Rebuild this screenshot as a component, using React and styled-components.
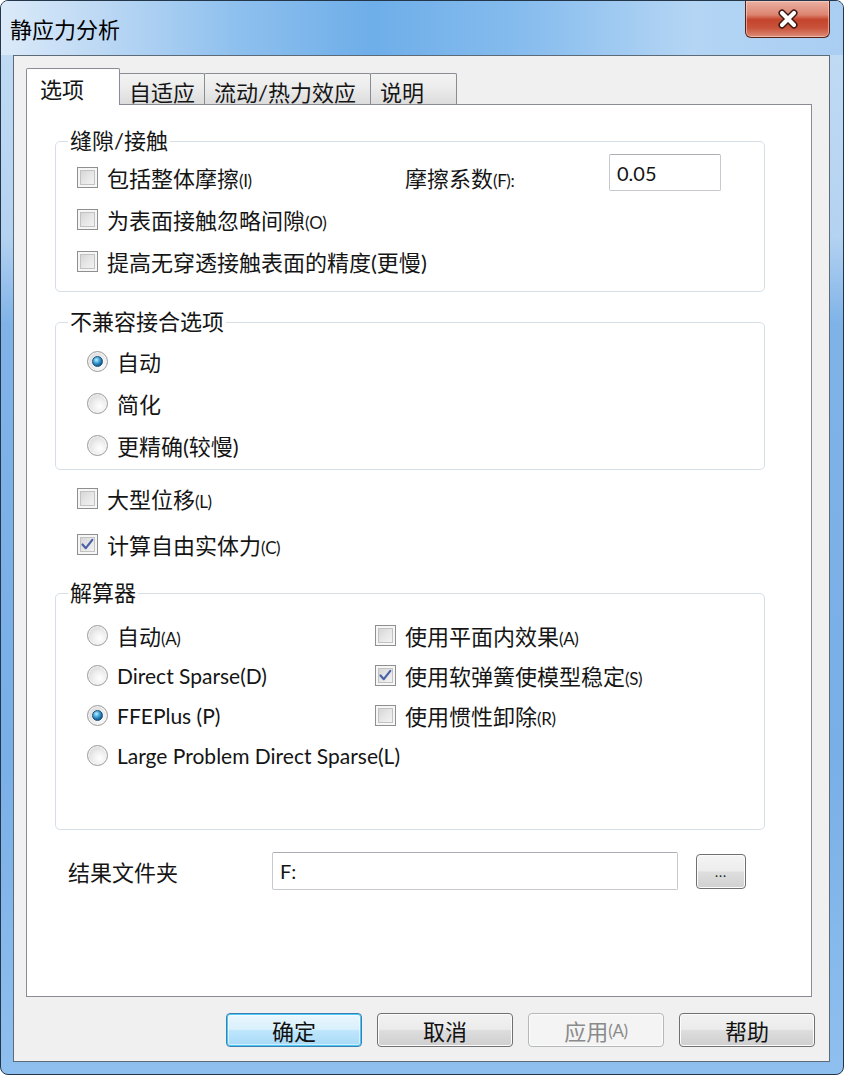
import React from "react";
import styled, { createGlobalStyle } from "styled-components";

const GlobalStyle = createGlobalStyle`
  html, body { margin: 0; padding: 0; background: #ffffff; }
  body { font-family: Lato, "Noto Sans CJK SC", sans-serif; color: #151515; }
  * { box-sizing: border-box; }
`;

// window chrome

const Window = styled.div`
  width: 844px;
  height: 1075px;
  display: flex;
  flex-direction: column;
  border: 1px solid #24364a;
  border-radius: 8px;
  overflow: hidden;
  background: linear-gradient(180deg, #c3dcf4 0%, #b4d2f1 22%, #7fb3e8 30%, #78afe7 70%, #8fbfee 100%);
`;

const TitleBar = styled.div`
  height: 54px;
  flex: none;
  display: flex;
  align-items: center;
  padding-left: 9px;
  background: linear-gradient(90deg, #dbeaf9 0%, #bcd8f4 12%, #8ec0ee 28%, #6eaee9 44%, #86bcee 62%, #b4d5f4 82%, #a9cef2 100%);
`;

const Title = styled.div`
  font-size: 22px;
  color: #000;
`;

const CloseButton = styled.div`
  align-self: flex-start;
  margin-left: auto;
  margin-right: 13px;
  width: 85px;
  height: 37px;
  display: flex;
  align-items: center;
  justify-content: center;
  border: 1px solid #5a2119;
  border-top: none;
  border-radius: 0 0 6px 6px;
  background: linear-gradient(180deg, #eab0a2 0%, #dc8571 38%, #c4442c 52%, #c9533b 75%, #dd8c77 100%);
  box-shadow: inset 0 0 0 1px rgba(255, 220, 210, 0.55);
`;

const Client = styled.div`
  flex: 1;
  margin: 0 13px 12px 12px;
  border: 1px solid #5d6a78;
  background: #f0f0f0;
  padding: 12px 17px 14px 12px;
  display: flex;
  flex-direction: column;
`;

// tabs

const TabStrip = styled.div`
  height: 36px;
  display: flex;
  align-items: flex-end;
  position: relative;
  z-index: 1;
`;

const Tab = styled.div`
  width: ${(p) => p.$w}px;
  height: ${(p) => (p.$active ? 37 : 31)}px;
  margin-bottom: ${(p) => (p.$active ? -1 : 0)}px;
  margin-left: ${(p) => (p.$first ? 0 : -1)}px;
  border: 1px solid #898c95;
  border-bottom: none;
  border-radius: 2px 2px 0 0;
  background: ${(p) => (p.$active ? "#ffffff" : "linear-gradient(180deg, #f3f3f3 0%, #ececec 45%, #dcdcdc 100%)")};
  display: flex;
  align-items: center;
  padding-left: ${(p) => p.$pad}px;
  padding-top: ${(p) => (p.$active ? 2 : 3)}px;
  font-size: 22px;
  white-space: nowrap;
  position: relative;
  z-index: ${(p) => (p.$active ? 2 : 1)};
`;

const Panel = styled.div`
  flex: 1;
  border: 1px solid #898c95;
  background: #ffffff;
  padding: 24px 46px 0 28px;
  display: flex;
  flex-direction: column;
`;

// group boxes

const Group = styled.fieldset`
  margin: ${(p) => p.$top || 0}px 0 0 0;
  border: 1px solid #d5dfe5;
  border-radius: 5px;
  padding: ${(p) => p.$pt}px 20px ${(p) => p.$pb}px 12px;
  min-width: 0;
`;

const Legend = styled.legend`
  font-size: 22px;
  line-height: 24px;
  padding: 0 2px;
`;

const Body = styled.div`
  padding-left: ${(p) => p.$indent}px;
`;

const Row = styled.div`
  height: ${(p) => p.$h}px;
  display: flex;
  align-items: center;
`;

const GridRow = styled.div`
  height: ${(p) => p.$h}px;
  display: grid;
  grid-template-columns: ${(p) => p.$cols};
  align-items: center;
`;

const Columns = styled.div`
  display: grid;
  grid-template-columns: 288px 1fr;
`;

const Item = styled.div`
  display: flex;
  align-items: center;
  gap: 9px;
  font-size: 22px;
  white-space: nowrap;
`;

const Key = styled.span`
  font-size: 17px;
  letter-spacing: -0.4px;
`;

const Latin = styled.span`
  font-size: 21px;
`;

const CheckBox = styled.span`
  width: 21px;
  height: 21px;
  flex: none;
  display: inline-flex;
  align-items: center;
  justify-content: center;
  border: 1px solid #8e8f8f;
  background: linear-gradient(135deg, #cfcfcf 0%, #e6e6e6 50%, #f8f8f8 100%);
  box-shadow: inset 0 0 0 2px #f6f6f6, inset 0 0 0 3px #c2c2c2;
`;

const Radio = styled.span`
  width: 21px;
  height: 21px;
  flex: none;
  border-radius: 50%;
  display: inline-flex;
  align-items: center;
  justify-content: center;
  border: 1px solid #9a9a9a;
  background: radial-gradient(circle at 62% 65%, #ffffff 0%, #eeeeee 40%, #cdcdcd 100%);
  box-shadow: inset 0 0 0 1px #f7f7f7;
`;

const Dot = styled.span`
  width: 11px;
  height: 11px;
  border-radius: 50%;
  border: 1px solid #1a4b76;
  background: radial-gradient(circle at 38% 32%, #c8eefd 0%, #5ab8e6 28%, #1b70a8 62%, #0b3f6a 100%);
`;

const Field = styled.div`
  width: ${(p) => p.$w}px;
  height: ${(p) => p.$h}px;
  margin-top: ${(p) => p.$shift || 0}px;
  border: 1px solid #c6c9d0;
  border-top-color: #abadb3;
  border-radius: 2px;
  background: #ffffff;
  display: flex;
  align-items: center;
  padding-left: 7px;
  font-size: 20px;
`;

const Label = styled.div`
  font-size: 22px;
  white-space: nowrap;
`;

const StandAlone = styled.div`
  margin-top: 5px;
  padding-left: 22px;
`;

const ResultRow = styled.div`
  margin-top: 22px;
  padding-left: 13px;
  height: 38px;
  display: flex;
  align-items: center;
`;

const ResultLabel = styled.div`
  width: 204px;
  font-size: 22px;
`;

const BrowseButton = styled.div`
  width: 50px;
  height: 35px;
  margin-left: 18px;
  border: 1px solid #707070;
  border-radius: 4px;
  background: linear-gradient(180deg, #f4f4f4 0%, #ececec 48%, #dedede 52%, #d0d0d0 100%);
  box-shadow: inset 0 0 0 1px #fbfbfb;
  display: flex;
  align-items: flex-end;
  justify-content: center;
  padding-bottom: 8px;
  font-size: 13px;
  letter-spacing: 1px;
`;

// dialog buttons

const ButtonRow = styled.div`
  margin-top: 16px;
  margin-right: -3px;
  display: flex;
  justify-content: flex-end;
  gap: 15px;
`;

const DialogButton = styled.div`
  width: 136px;
  height: 34px;
  border-radius: 4px;
  display: flex;
  align-items: center;
  justify-content: center;
  font-size: 22px;
  border: 1px solid ${(p) => (p.$default ? "#3c7fb1" : p.$disabled ? "#b5b8ba" : "#707070")};
  color: ${(p) => (p.$disabled ? "#8a8a8a" : "#111")};
  background: ${(p) =>
    p.$default
      ? "linear-gradient(180deg, #eaf6fd 0%, #d9f0fc 48%, #bee6fd 52%, #a7d9f5 100%)"
      : p.$disabled
      ? "#f4f4f4"
      : "linear-gradient(180deg, #f2f2f2 0%, #ebebeb 48%, #dddddd 52%, #cfcfcf 100%)"};
  box-shadow: ${(p) =>
    p.$default ? "inset 0 0 0 1px #48c9f6, inset 0 0 0 2px rgba(255,255,255,0.5)" : "inset 0 0 0 1px #fcfcfc"};
`;

const Check = ({ checked }) => (
  <CheckBox>
    {checked && (
      <svg width="15" height="15" viewBox="0 0 15 15">
        <path d="M2.5 7.5 L5.8 11.2 L12.3 2.8" fill="none" stroke="#4a63a8" strokeWidth="2.2" strokeLinecap="round" strokeLinejoin="round" />
      </svg>
    )}
  </CheckBox>
);

const CheckItem = ({ checked, children }) => (
  <Item>
    <Check checked={checked} />
    <span>{children}</span>
  </Item>
);

const RadioItem = ({ checked, children }) => (
  <Item>
    <Radio>{checked && <Dot />}</Radio>
    <span>{children}</span>
  </Item>
);

const App = () => (
  <>
    <GlobalStyle />
    <Window>
      <TitleBar>
        <Title>静应力分析</Title>
        <CloseButton>
          <svg width="24" height="20" viewBox="0 0 24 20">
            <path d="M6 4 L18 16 M18 4 L6 16" stroke="#3b1510" strokeWidth="7" strokeLinecap="round" />
            <path d="M6 4 L18 16 M18 4 L6 16" stroke="#ffffff" strokeWidth="4.2" strokeLinecap="round" />
          </svg>
        </CloseButton>
      </TitleBar>
      <Client>
        <TabStrip>
          <Tab $first $active $w={94} $pad={13}>选项</Tab>
          <Tab $w={86} $pad={9}>自适应</Tab>
          <Tab $w={167} $pad={9}>流动/热力效应</Tab>
          <Tab $w={87} $pad={9}>说明</Tab>
        </TabStrip>
        <Panel>
          <Group $pt={3} $pb={9}>
            <Legend>缝隙/接触</Legend>
            <Body $indent={9}>
              <GridRow $h={42} $cols="328px 204px 112px">
                <CheckItem>包括整体摩擦<Key>(I)</Key></CheckItem>
                <Label>摩擦系数<Key>(F):</Key></Label>
                <Field $w={112} $h={37} $shift={-9}>0.05</Field>
              </GridRow>
              <Row $h={42}>
                <CheckItem>为表面接触忽略间隙<Key>(O)</Key></CheckItem>
              </Row>
              <Row $h={42}>
                <CheckItem>提高无穿透接触表面的精度(更慢)</CheckItem>
              </Row>
            </Body>
          </Group>

          <Group $top={18} $pt={6} $pb={3}>
            <Legend>不兼容接合选项</Legend>
            <Body $indent={19}>
              <Row $h={42}>
                <RadioItem checked>自动</RadioItem>
              </Row>
              <Row $h={42}>
                <RadioItem>简化</RadioItem>
              </Row>
              <Row $h={42}>
                <RadioItem>更精确(较慢)</RadioItem>
              </Row>
            </Body>
          </Group>

          <StandAlone>
            <Row $h={46}>
              <CheckItem>大型位移<Key>(L)</Key></CheckItem>
            </Row>
            <Row $h={46}>
              <CheckItem checked>计算自由实体力<Key>(C)</Key></CheckItem>
            </Row>
          </StandAlone>

          <Group $top={14} $pt={10} $pb={54}>
            <Legend>解算器</Legend>
            <Body $indent={19}>
              <Columns>
                <div>
                  <Row $h={40}>
                    <RadioItem>自动<Key>(A)</Key></RadioItem>
                  </Row>
                  <Row $h={40}>
                    <RadioItem><Latin>Direct Sparse(D)</Latin></RadioItem>
                  </Row>
                  <Row $h={40}>
                    <RadioItem checked><Latin>FFEPlus (P)</Latin></RadioItem>
                  </Row>
                  <Row $h={40}>
                    <RadioItem><Latin>Large Problem Direct Sparse(L)</Latin></RadioItem>
                  </Row>
                </div>
                <div>
                  <Row $h={40}>
                    <CheckItem>使用平面内效果<Key>(A)</Key></CheckItem>
                  </Row>
                  <Row $h={40}>
                    <CheckItem checked>使用软弹簧使模型稳定<Key>(S)</Key></CheckItem>
                  </Row>
                  <Row $h={40}>
                    <CheckItem>使用惯性卸除<Key>(R)</Key></CheckItem>
                  </Row>
                </div>
              </Columns>
            </Body>
          </Group>

          <ResultRow>
            <ResultLabel>结果文件夹</ResultLabel>
            <Field $w={406} $h={38}>F:</Field>
            <BrowseButton>...</BrowseButton>
          </ResultRow>
        </Panel>
        <ButtonRow>
          <DialogButton $default>确定</DialogButton>
          <DialogButton>取消</DialogButton>
          <DialogButton $disabled>应用<Key>(A)</Key></DialogButton>
          <DialogButton>帮助</DialogButton>
        </ButtonRow>
      </Client>
    </Window>
  </>
);

export default App;
